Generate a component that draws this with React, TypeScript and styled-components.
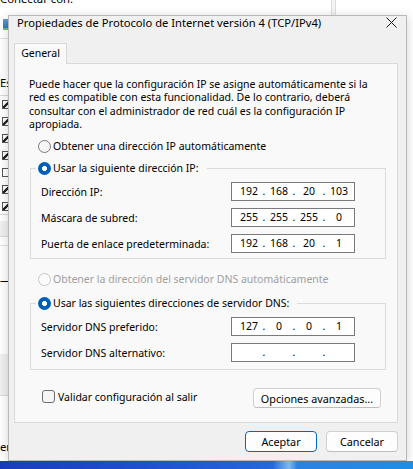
import styled, { createGlobalStyle } from 'styled-components';

const GlobalStyle = createGlobalStyle`
  html, body {
    margin: 0;
    padding: 0;
    background: #ffffff;
    overflow: hidden;
  }
  body {
    font-family: 'Segoe UI', 'Noto Sans', 'Liberation Sans', sans-serif;
    font-size: 10.5px;
    color: #000000;
  }
`;

type RadioState = 'on' | 'off' | 'disabled';

const ip1 = ['192', '168', '20', '103'];
const mask = ['255', '255', '255', '0'];
const gateway = ['192', '168', '20', '1'];
const dns1 = ['127', '0', '0', '1'];
const empty = ['', '', '', ''];

const IpBox = ({ parts }: { parts: string[] }) => (
  <IpField>
    {parts.map((p, i) => [
      <Octet key={'o' + i}>{p}</Octet>,
      i < 3 ? <Dot key={'d' + i}>.</Dot> : null,
    ])}
  </IpField>
);

const Radio = ({ state, label }: { state: RadioState; label: string }) => (
  <RadioLabel $disabled={state === 'disabled'}>
    <Circle $state={state} />
    {label}
  </RadioLabel>
);

const CloseIcon = () => (
  <svg width="11" height="11" viewBox="0 0 11 11">
    <path d="M0.5 0.5 L10.5 10.5 M10.5 0.5 L0.5 10.5" stroke="#1a1a1a" strokeWidth="1" fill="none" />
  </svg>
);

export default function App() {
  return (
    <>
      <GlobalStyle />
      <Desktop>
        <BackWindow>
          <BackCaption $wide>Conectar con:</BackCaption>
          <AdapterIcon />
          <BackRule />
          <BackCaption $top={37}>Esta</BackCaption>
          <BackList>
            {[true, true, true, true, false, true, true].map((c, i) => (
              <BackCheck key={i} $checked={c} />
            ))}
          </BackList>
          <BackBand $top={6} $height={15} />
          <BackRule $top={8} />
          <BackCaption $top={27}>—D</BackCaption>
          <BackBand $top={68} $height={41} />
          <BackCaption $top={44}>er</BackCaption>
          <BackEdge />
        </BackWindow>

        <Dialog>
          <TitleBar>
            <Title>Propiedades de Protocolo de Internet versión 4 (TCP/IPv4)</Title>
            <CloseButton>
              <CloseIcon />
            </CloseButton>
          </TitleBar>

          <Body>
            <Tabs>
              <Tab>General</Tab>
            </Tabs>
            <Panel>
              <Description>
                Puede hacer que la configuración IP se asigne automáticamente si la
                <br />
                red es compatible con esta funcionalidad. De lo contrario, deberá
                <br />
                consultar con el administrador de red cuál es la configuración IP
                <br />
                apropiada.
              </Description>

              <RadioRow $top={8}>
                <Radio state="off" label="Obtener una dirección IP automáticamente" />
              </RadioRow>

              <Group $top={8} $bottom={5}>
                <Legend>
                  <Radio state="on" label="Usar la siguiente dirección IP:" />
                </Legend>
                <Row>
                  <FieldLabel>Dirección IP:</FieldLabel>
                  <IpBox parts={ip1} />
                </Row>
                <Row>
                  <FieldLabel>Máscara de subred:</FieldLabel>
                  <IpBox parts={mask} />
                </Row>
                <Row>
                  <FieldLabel>Puerta de enlace predeterminada:</FieldLabel>
                  <IpBox parts={gateway} />
                </Row>
              </Group>

              <RadioRow $top={13}>
                <Radio state="disabled" label="Obtener la dirección del servidor DNS automáticamente" />
              </RadioRow>

              <Group $top={10} $bottom={7}>
                <Legend>
                  <Radio state="on" label="Usar las siguientes direcciones de servidor DNS:" />
                </Legend>
                <Row>
                  <FieldLabel>Servidor DNS preferido:</FieldLabel>
                  <IpBox parts={dns1} />
                </Row>
                <Row>
                  <FieldLabel>Servidor DNS alternativo:</FieldLabel>
                  <IpBox parts={empty} />
                </Row>
              </Group>

              <BottomRow>
                <CheckLabel>
                  <CheckBox />
                  Validar configuración al salir
                </CheckLabel>
                <Button $width={128} $height={20}>Opciones avanzadas...</Button>
              </BottomRow>
            </Panel>

            <Footer>
              <Button $primary $width={72} $height={21}>Aceptar</Button>
              <Button $width={72} $height={21}>Cancelar</Button>
            </Footer>
          </Body>
        </Dialog>

        <Taskbar />
      </Desktop>
    </>
  );
}

const Desktop = styled.div`
  position: relative;
  width: 413px;
  height: 469px;
  overflow: hidden;
  background: #ffffff;
`;

const BackWindow = styled.div`
  position: absolute;
  left: 0;
  top: 0;
  width: 336px;
  height: 461px;
  background: #ffffff;
  display: flex;
  flex-direction: column;
  & > * {
    flex-shrink: 0;
  }
`;

const BackCaption = styled.div<{ $top?: number; $wide?: boolean }>`
  margin-top: ${(p) => (p.$top === undefined ? -8 : p.$top)}px;
  width: ${(p) => (p.$wide ? 'auto' : '14px')};
  overflow: hidden;
  height: 13px;
  line-height: 13px;
  font-size: 11.3px;
  white-space: nowrap;
  color: #000;
`;

const AdapterIcon = styled.div`
  margin: 14px 0 0 3px;
  width: 10px;
  height: 9px;
  background: linear-gradient(#5aa0dc, #2f78c0);
  border-bottom: 2px solid #6cc070;
`;

const BackRule = styled.div<{ $top?: number }>`
  margin-top: ${(p) => p.$top ?? 8}px;
  height: 1px;
  background: #e2e2e2;
`;

const BackList = styled.div`
  margin-top: 6px;
  height: 120px;
  border-top: 1px solid #d8d8d8;
  border-bottom: 1px solid #d8d8d8;
  display: flex;
  flex-direction: column;
  gap: 8px;
  padding: 4px 0 0 2px;
  box-sizing: border-box;
`;

const BackCheck = styled.div<{ $checked: boolean }>`
  width: 9px;
  height: 9px;
  box-sizing: border-box;
  border: 1px solid #555;
  background: ${(p) => (p.$checked ? 'linear-gradient(135deg, #fff 35%, #222 40%, #222 60%, #fff 65%)' : '#fff')};
`;

const BackBand = styled.div<{ $top: number; $height: number }>`
  margin-top: ${(p) => p.$top}px;
  height: ${(p) => p.$height}px;
  background: #f0f0f0;
  border-bottom: 1px solid #dadada;
`;

const BackEdge = styled.div`
  position: absolute;
  right: 0;
  top: 0;
  width: 3px;
  height: 15px;
  border-left: 1px solid #dcdcdc;
  border-right: 1px solid #dcdcdc;
  background: #f4f4f4;
`;

const Dialog = styled.div`
  position: absolute;
  left: 8px;
  top: 15px;
  width: 399px;
  height: 446px;
  box-sizing: border-box;
  border: 1px solid #b9b9b9;
  background: #f0f0f0;
  box-shadow: 0 2px 10px rgba(0, 0, 0, 0.18);
  display: flex;
  flex-direction: column;
`;

const TitleBar = styled.div`
  height: 14px;
  display: flex;
  align-items: center;
  justify-content: space-between;
  padding: 0 9px 0 8px;
`;

const Title = styled.span`
  font-size: 11.2px;
  line-height: 14px;
  white-space: nowrap;
`;

const CloseButton = styled.span`
  display: flex;
  align-items: center;
  margin-top: -1px;
`;

const Body = styled.div`
  margin-top: 13px;
  padding: 0 8px 0 5px;
  display: flex;
  flex-direction: column;
`;

const Tabs = styled.div`
  display: flex;
  position: relative;
  z-index: 1;
`;

const Tab = styled.div`
  width: 53px;
  height: 21px;
  box-sizing: border-box;
  border: 1px solid #d9d9d9;
  border-bottom: none;
  background: #f9f9f9;
  text-align: center;
  line-height: 19px;
  margin-bottom: -1px;
`;

const Panel = styled.div`
  height: 360px;
  box-sizing: border-box;
  border: 1px solid #d9d9d9;
  background: #f9f9f9;
  display: flex;
  flex-direction: column;
`;

const Description = styled.div`
  margin: 14px 0 0 14px;
  line-height: 13.3px;
  white-space: nowrap;
`;

const RadioRow = styled.div<{ $top: number }>`
  margin: ${(p) => p.$top}px 0 0 23px;
  height: 14px;
  display: flex;
  align-items: center;
`;

const RadioLabel = styled.label<{ $disabled?: boolean }>`
  display: flex;
  align-items: center;
  gap: 2px;
  height: 14px;
  line-height: 14px;
  white-space: nowrap;
  color: ${(p) => (p.$disabled ? '#a0a0a0' : '#000')};
`;

const Circle = styled.span<{ $state: RadioState }>`
  width: 13px;
  height: 13px;
  box-sizing: border-box;
  border-radius: 50%;
  flex-shrink: 0;
  ${(p) =>
    p.$state === 'on'
      ? `background: radial-gradient(circle, #ffffff 0 2.3px, #005fb8 2.8px);`
      : p.$state === 'disabled'
      ? `border: 1px solid #c6c6c6; background: #fbfbfb;`
      : `border: 1px solid #7a7a7a; background: #f6f6f6;`}
`;

const Group = styled.fieldset<{ $top: number; $bottom: number }>`
  margin: ${(p) => p.$top}px 0 0 15px;
  width: 356px;
  box-sizing: border-box;
  border: 1px solid #dcdcdc;
  padding: 7px 30px ${(p) => p.$bottom}px 10px;
  display: flex;
  flex-direction: column;
  gap: 7px;
  min-inline-size: 0;
`;

const Legend = styled.legend`
  margin-left: -5px;
  padding: 0 8px 0 2px;
  height: 14px;
`;

const Row = styled.div`
  height: 19px;
  display: flex;
  align-items: center;
  justify-content: space-between;
`;

const FieldLabel = styled.span`
  white-space: nowrap;
`;

const IpField = styled.div`
  width: 124px;
  height: 19px;
  box-sizing: border-box;
  border: 1px solid #7a7a7a;
  background: #ffffff;
  display: grid;
  grid-template-columns: 26px 4px 26px 4px 26px 4px 26px;
  align-items: center;
  padding-left: 4px;
  line-height: 17px;
`;

const Octet = styled.span`
  text-align: center;
`;

const Dot = styled.span`
  text-align: center;
`;

const BottomRow = styled.div`
  margin: 18px 16px 0 27px;
  height: 20px;
  display: flex;
  align-items: center;
  justify-content: space-between;
`;

const CheckLabel = styled.label`
  display: flex;
  align-items: center;
  gap: 3px;
  white-space: nowrap;
  margin-top: -3px;
`;

const CheckBox = styled.span`
  width: 13px;
  height: 13px;
  box-sizing: border-box;
  border: 1px solid #6e6e6e;
  border-radius: 3px;
  background: #f6f6f6;
`;

const Button = styled.button<{ $primary?: boolean; $width: number; $height: number }>`
  width: ${(p) => p.$width}px;
  height: ${(p) => p.$height}px;
  box-sizing: border-box;
  padding: 0;
  font-family: inherit;
  font-size: 10.8px;
  color: #000;
  background: #fdfdfd;
  border: 1px solid ${(p) => (p.$primary ? '#0067c0' : '#d0d0d0')};
  border-bottom-color: ${(p) => (p.$primary ? '#0067c0' : '#bdbdbd')};
  border-radius: 4px;
`;

const Footer = styled.div`
  margin-top: 8px;
  display: flex;
  justify-content: flex-end;
  gap: 9px;
`;

const Taskbar = styled.div`
  position: absolute;
  left: 0;
  right: 0;
  bottom: 0;
  height: 8px;
  background: linear-gradient(
    90deg,
    #1a3cbc 0%,
    #1f4fd0 35%,
    #2468dc 66%,
    #7fb8ee 70%,
    #2a82e2 72%,
    #1f8de6 100%
  );
`;
